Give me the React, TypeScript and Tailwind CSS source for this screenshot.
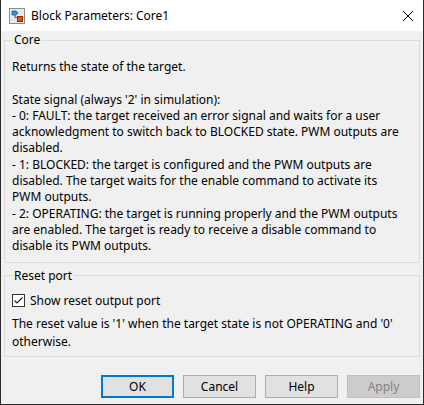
import { useState } from "react";

const coreLines = [
  "Returns the state of the target.",
  "",
  "State signal (always '2' in simulation):",
  "- 0: FAULT: the target received an error signal and waits for a user",
  "acknowledgment to switch back to BLOCKED state. PWM outputs are",
  "disabled.",
  "- 1: BLOCKED: the target is configured and the PWM outputs are",
  "disabled. The target waits for the enable command to activate its",
  "PWM outputs.",
  "- 2: OPERATING: the target is running properly and the PWM outputs",
  "are enabled. The target is ready to receive a disable command to",
  "disable its PWM outputs.",
];

function BlockIcon() {
  return (
    <svg width="16" height="16" viewBox="0 0 16 16">
      <rect x="0.5" y="0.5" width="15" height="15" fill="#f4f4f4" stroke="#8a8a8a" />
      <rect x="1.5" y="1.5" width="13" height="13" fill="#e6e6e6" />
      <path d="M3 3 L7 3 L9 5 L7 7 L3 7 Z" fill="#2f8fe0" stroke="#1b5fa8" strokeWidth="0.8" />
      <path d="M6 7 L6 9.5 L9 9.5" fill="none" stroke="#555" strokeWidth="1" />
      <rect x="8.5" y="8.5" width="5" height="5" fill="#e8501c" stroke="#8a2a0a" />
    </svg>
  );
}

function DialogButton({ label, primary, disabled }: { label: string; primary?: boolean; disabled?: boolean }) {
  return (
    <button
      disabled={disabled}
      className={
        "h-[23px] w-[73px] text-[12px] " +
        (primary
          ? "border-2 border-[#0078d7] bg-[#e1e1e1] text-black"
          : disabled
            ? "border border-[#bfbfbf] bg-[#cccccc] text-[#838383]"
            : "border border-[#adadad] bg-[#e1e1e1] text-black")
      }
    >
      {label}
    </button>
  );
}

export default function App() {
  const [showReset, setShowReset] = useState(true);

  return (
    <div
      className="flex h-[405px] w-[424px] flex-col overflow-hidden border-x border-b border-[#2b2b2b] bg-[#f0f0f0] text-[12px] text-black"
      style={{ fontFamily: '"Segoe UI", "Noto Sans", sans-serif' }}
    >
      <div className="flex h-[31px] items-center bg-white pl-[8px] pr-[10px]">
        <BlockIcon />
        <span className="ml-[6px] flex-1 leading-none">Block Parameters: Core1</span>
        <svg width="10" height="10" viewBox="0 0 10 10">
          <path d="M0 0 L10 10 M10 0 L0 10" stroke="#000" strokeWidth="1" />
        </svg>
      </div>

      <div className="flex flex-1 flex-col px-[3px]">
        <fieldset className="mt-[1px] border border-[#dcdcdc] px-[7px] pb-[7px]">
          <legend className="ml-[1px] px-[1px] leading-[16px]">Core</legend>
          <div className="pt-[11px] leading-[16.3px]">
            {coreLines.map((line, i) => (
              <div key={i} className="h-[16.3px] whitespace-nowrap">
                {line}
              </div>
            ))}
          </div>
        </fieldset>

        <fieldset className="mt-[5px] border border-[#dcdcdc] px-[7px] pb-[5px]">
          <legend className="ml-[1px] px-[1px] leading-[16px]">Reset port</legend>
          <label className="mt-[8px] flex h-[18px] items-center gap-[5px]">
            <span
              className="flex h-[13px] w-[13px] items-center justify-center border border-[#333] bg-white"
              onClick={() => setShowReset(!showReset)}
            >
              {showReset && (
                <svg width="11" height="11" viewBox="0 0 11 11">
                  <path d="M1.5 5.5 L4 8 L9.5 2.5" fill="none" stroke="#222" strokeWidth="1.2" />
                </svg>
              )}
            </span>
            <span>Show reset output port</span>
          </label>
          <div className="mt-[5px] leading-[18px]">
            <div className="whitespace-nowrap">
              The reset value is '1' when the target state is not OPERATING and '0'
            </div>
            <div>otherwise.</div>
          </div>
        </fieldset>

        <div className="mt-auto mb-[6px] flex justify-end gap-[9px]">
          <DialogButton label="OK" primary />
          <DialogButton label="Cancel" />
          <DialogButton label="Help" />
          <DialogButton label="Apply" disabled />
        </div>
      </div>
    </div>
  );
}
